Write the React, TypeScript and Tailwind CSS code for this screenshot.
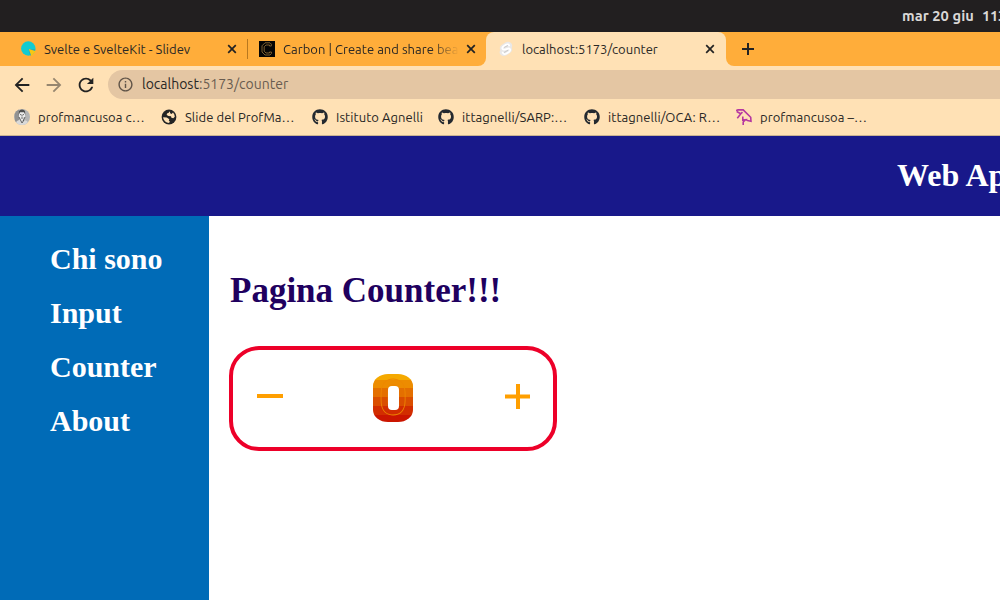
import React from "react";
import { FaGithub } from "react-icons/fa";
import { MdArrowBack, MdArrowForward, MdRefresh, MdInfoOutline } from "react-icons/md";

const ui = "font-['Ubuntu','Noto_Sans',sans-serif]";

function Close() {
  return (
    <svg width="10" height="10" viewBox="0 0 10 10" className="shrink-0">
      <path d="M1.2 1.2L8.8 8.8M8.8 1.2L1.2 8.8" stroke="#222" strokeWidth="1.7" />
    </svg>
  );
}

function SlidevIcon() {
  return (
    <svg width="16" height="16" viewBox="0 0 16 16">
      <circle cx="7.3" cy="7.5" r="7.2" fill="#13cbd0" />
      <path d="M7.5 8.3L14.4 8.3A7 7 0 0 1 9 14.5Z" fill="#28a9ba" />
      <path d="M7.8 8L15 10.3L10.4 15.2Z" fill="#f6c715" />
    </svg>
  );
}

function CarbonIcon() {
  return (
    <svg width="16" height="16" viewBox="0 0 16 16">
      <rect width="16" height="16" fill="#050505" />
      <path d="M12.4 4.8V3.2L11 1.8H6L3 4.8V11L6 14H11L12.4 12.6V11M10.5 5V4H7L5.2 5.8V10.2L7 12H10.5V11M10.5 5H12.4M10.5 11H12.4" fill="none" stroke="#8a6a35" strokeWidth=".9" />
    </svg>
  );
}

function SvelteIcon() {
  return (
    <svg width="14" height="16" viewBox="0 0 14 16">
      <path d="M12 2C10 0 8 .5 6 1.8L2.6 4Q-.2 6 1.3 9Q-.4 12 2 14Q4.5 16.2 8 14L11.3 11.8Q14 9.6 12.7 6.7Q14 4 12 2Z" fill="#e9e8e8" />
      <path d="M10.4 5.2C10 3 8 3 6.8 3.8L4 5.7C2.5 7 3.7 9.2 5.7 8.6L9 7.6C11.3 7 12.2 9.4 10 11L7 12.8C5.2 13.7 3.5 12.6 3.5 10.8" fill="none" stroke="#fff" strokeWidth="1.7" />
      <path d="M5 6.5L9 4.5M5 11.5L9 9.3" stroke="#bcbcbc" strokeWidth=".7" />
    </svg>
  );
}

function Globe() {
  return (
    <svg width="16" height="16" viewBox="0 0 16 16">
      <circle cx="8" cy="8" r="7.4" fill="#242424" />
      <path d="M8.8 2.2L7.7 3.8L6 4.4L5.7 6L7.5 7L10 7.2L10.4 8.7L12.3 9.3L13.8 7.7A6 6 0 0 0 12 3.5L10.6 5L9.2 4.3Z" fill="#ffe1b5" />
      <path d="M2.1 8.2L5.8 8.5L8.3 10.2L7.8 11.8L8.8 12.2L8.1 14A6 6 0 0 1 2.1 8.2Z" fill="#ffe1b5" />
    </svg>
  );
}

function Portrait() {
  return (
    <svg width="16" height="16" viewBox="0 0 16 16">
      <defs><clipPath id="face"><circle cx="8" cy="8" r="8" /></clipPath></defs>
      <g clipPath="url(#face)">
        <rect width="16" height="16" fill="#b5b5b5" />
        <path d="M0 0H5V12L1 13Z" fill="#929292" />
        <path d="M1 16L3 12L7 10L13 12L15 16Z" fill="#d9d9d9" />
        <path d="M5 2L11 2L11 8L9 12H7L5 8Z" fill="#ececec" />
        <path d="M4.7 6L5 2Q8-.8 11 2L11.3 6L10 3.2L6 3.2Z" fill="#505050" />
        <path d="M6 5.6H7.4M8.7 5.6H10M7 9H9.3M8 6V7.5M7 12L8 14L10 11M5 8L7 12M11 8L9 12" stroke="#484848" strokeWidth=".8" fill="none" />
      </g>
    </svg>
  );
}

function Bird() {
  return (
    <svg width="16" height="16" viewBox="0 0 16 16" fill="none" stroke="#b637a0" strokeWidth="1.6">
      <path d="M0 1.5L2 .9H7.2L14.7 8.3L15 12.2L11.5 11.5L9.5 10.4M.7 2.5L4.8 4.7L1.3 9.2M4.8 4.7L6.5 3.2M6.8 7.5V11L9.5 10.7L7.2 13V16" />
    </svg>
  );
}

const bookmarks = [
  { label: "profmancusoa c…", width: "w-[147px]", icon: <Portrait /> },
  { label: "Slide del ProfMa…", width: "w-[151px]", icon: <Globe /> },
  { label: "Istituto Agnelli", width: "w-[126px]", icon: <FaGithub size={16} color="#24292f" /> },
  { label: "ittagnelli/SARP:…", width: "w-[146px]", icon: <FaGithub size={16} color="#24292f" /> },
  { label: "ittagnelli/OCA: R…", width: "w-[152px]", icon: <FaGithub size={16} color="#24292f" /> },
  { label: "profmancusoa –…", width: "w-[147px]", icon: <Bird /> },
];

export default function App() {
  return (
    <div className={`flex h-[600px] w-[1000px] flex-col overflow-hidden bg-white text-[#292725] ${ui}`}>
      <div className="flex h-8 shrink-0 items-center overflow-hidden bg-[#221f20] pl-[902px] text-[14.67px] font-bold whitespace-pre text-[#dad8d6]">
        <span className="tracking-[0.05px]">mar 20 giu</span>
        <span className="ml-2 tracking-[-0.2px]">113:6</span>
      </div>

      <div className="flex h-[34px] shrink-0 bg-[#ffe1b5] text-[13px] whitespace-nowrap">
        <div className="flex w-[486px] items-center rounded-br-lg bg-[#ffad3a]">
          <div className="flex w-[247px] items-center pl-[21px]">
            <SlidevIcon />
            <span className="ml-[7px] w-[183px] pt-[2px] tracking-[0.03px]">Svelte e SvelteKit - Slidev</span>
            <Close />
          </div>
          <div className="h-5 w-px bg-[#b8781f]" />
          <div className="flex items-center pl-[11px]">
            <CarbonIcon />
            <span className="ml-2 w-[176px] overflow-hidden pt-[2px] tracking-[0.03px] [mask-image:linear-gradient(to_right,black_84%,transparent)]">Carbon | Create and share beautiful</span>
            <span className="ml-[7px]"><Close /></span>
          </div>
        </div>
        <div className="w-[240px] bg-[#ffad3a]">
          <div className="flex h-full items-center rounded-t-lg bg-[#ffe1b5] pl-[13px]">
            <SvelteIcon />
            <span className="ml-[9px] w-[183px] pt-[2px]">localhost:5173/counter</span>
            <Close />
          </div>
        </div>
        <div className="flex flex-1 items-center rounded-bl-lg bg-[#ffad3a] pl-4">
          <svg width="12" height="12" viewBox="0 0 12 12"><path d="M6 0V12M0 6H12" stroke="#222" strokeWidth="2" /></svg>
        </div>
      </div>

      <div className="flex h-[33px] shrink-0 bg-[#ffe1b5] pt-1">
        <div className="flex w-[108px] items-center pl-[11px]">
          <MdArrowBack size={22} color="#222" />
          <MdArrowForward size={22} className="ml-[10px]" color="#96866f" />
          <MdRefresh size={22} className="ml-[10px]" color="#222" />
        </div>
        <div className="flex flex-1 items-center rounded-l-full bg-[#e4c6a3] pl-[9px] text-[14px]">
          <MdInfoOutline size={17} color="#605448" />
          <span className="ml-2">localhost<span className="text-[#695c50]">:5173/counter</span></span>
        </div>
      </div>

      <div className="flex h-[37px] shrink-0 items-center border-b border-[#c9b293] bg-[#ffe1b5] pl-[14px] text-[13px] whitespace-nowrap">
        {bookmarks.map((b) => (
          <div key={b.label} className={`flex shrink-0 items-center gap-2 ${b.width}`}>
            {b.icon}
            <span className="pt-[2px] tracking-[0.06px]">{b.label}</span>
          </div>
        ))}
      </div>

      <header className="h-20 shrink-0 overflow-hidden bg-[#18188a] pt-[21px] pl-[897px] font-['Liberation_Serif',serif] text-[32px] leading-9 font-bold whitespace-nowrap text-white">
        Web App
      </header>

      <div className="flex flex-1 font-['Liberation_Serif',serif] font-bold">
        <nav className="flex w-[209px] flex-col gap-[18px] bg-[#006bb7] pt-[25px] pl-[50px] text-[30px] leading-9 text-white">
          <a>Chi sono</a>
          <a>Input</a>
          <a>Counter</a>
          <a>About</a>
        </nav>
        <main className="flex-1 pt-[55px] pl-5">
          <h1 className="pl-px text-[35px] leading-10 text-[#20005f]">Pagina Counter!!!</h1>
          <div className="mt-[35px] flex h-[105px] w-[328px] items-start rounded-[30px] border-4 border-[#ed0029] pl-6">
            <svg width="26" height="4" viewBox="0 0 26 4" className="mt-11"><path d="M0 2H26" stroke="#ff9f00" strokeWidth="4" /></svg>
            <div className="mt-6 ml-[90px] grid h-12 w-10 place-items-center rounded-[15px/12px] bg-[linear-gradient(#f5a900_0_6px,#ed8c00_6px_14px,#e46f00_14px_23px,#da4e00_23px_32px,#d22d00_32px_41px,#cb1500_41px)]">
              <span className="col-start-1 row-start-1 font-['Roboto',sans-serif] text-[50px] leading-[48px] font-bold text-transparent [-webkit-text-stroke:0.8px_#ed8700]">0</span>
              <span className="col-start-1 row-start-1 h-6 w-[11px] rounded-[4px] bg-white" />
            </div>
            <svg width="26" height="26" viewBox="0 0 26 26" className="mt-[34px] ml-[92px]"><path d="M13 0V25M0 12.5H25" stroke="#ff9f00" strokeWidth="4" /></svg>
          </div>
        </main>
      </div>
    </div>
  );
}
